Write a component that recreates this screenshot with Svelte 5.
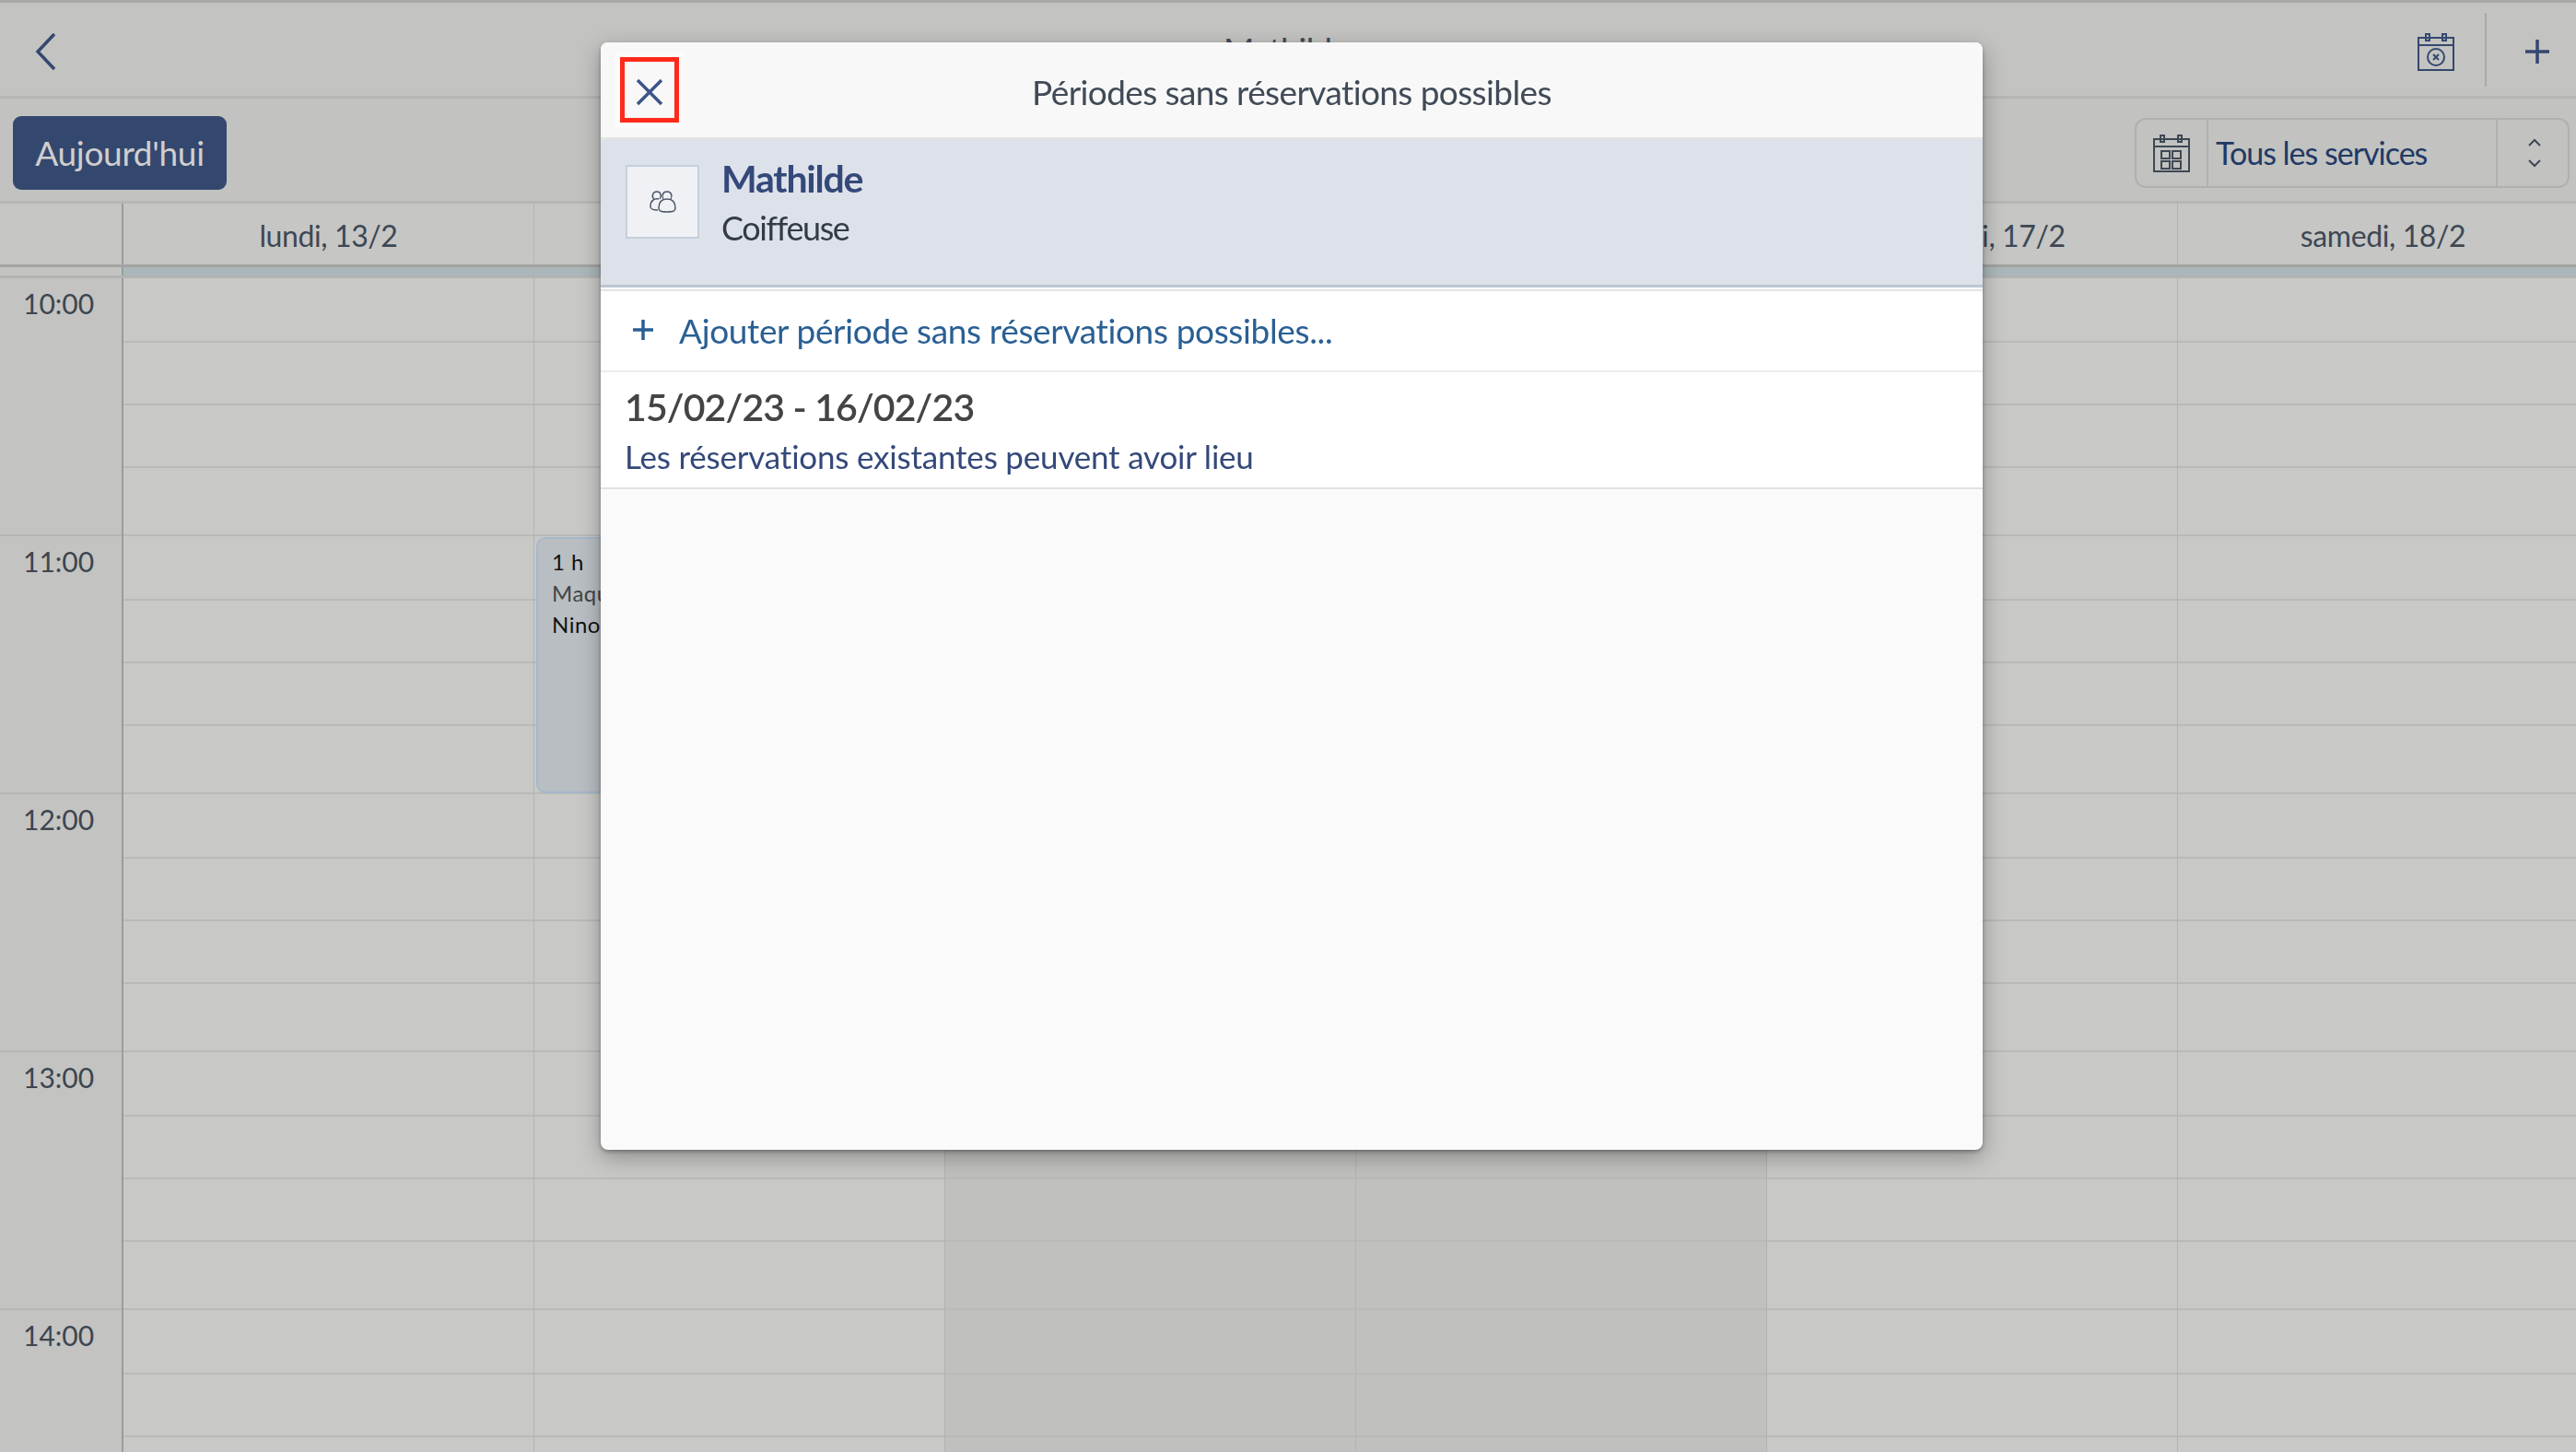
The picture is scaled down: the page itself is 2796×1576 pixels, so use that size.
<script>
  const days = ['lundi, 13/2', 'mardi, 14/2', 'mercredi, 15/2', 'jeudi, 16/2', 'vendredi, 17/2', 'samedi, 18/2'];
  const hours = ['10:00', '11:00', '12:00', '13:00', '14:00'];
  const quarters = Array.from({ length: 20 }, (_, i) => i);
</script>

<div class="page">
  <header class="topbar">
    <svg class="back" width="24" height="42" viewBox="0 0 24 42"><path d="M21 2 L3 21 L21 40" /></svg>
    <div class="page-title">Mathilde</div>
    <svg class="cal-x" width="40" height="42" viewBox="0 0 40 42">
      <path d="M1 6h38v35H1z M1 14h38 M8 6h12 M24 6h8" />
      <path d="M9 2h4v7H9z M27 2h4v7h-4z" />
      <circle cx="20" cy="27" r="9" />
      <path d="M17 24l6 6 M23 24l-6 6" />
    </svg>
    <div class="sep"></div>
    <svg class="plus" width="28" height="28" viewBox="0 0 28 28"><path d="M14 1v26 M1 14h26" /></svg>
  </header>

  <div class="toolbar">
    <button class="today">Aujourd'hui</button>
    <div class="select">
      <div class="select-icon">
        <svg width="40" height="42" viewBox="0 0 40 42">
          <path d="M1 6h38v35H1z M1 14h38 M8 6h12 M24 6h8" />
          <path d="M8 2h4v7H8z M27 2h4v7h-4z" />
          <path d="M9 19h9v8H9z M21 19h9v8h-9z M9 30h9v8H9z M21 30h9v8h-9z" />
        </svg>
      </div>
      <div class="select-text">Tous les services</div>
      <div class="select-arrows">
        <svg width="16" height="32" viewBox="0 0 16 32"><path d="M2 8l6-6 6 6 M2 24l6 6 6-6" /></svg>
      </div>
    </div>
  </div>

  <div class="dayhead">
    <div class="gutter-head"></div>
    {#each days as d}
      <div class="dayname">{d}</div>
    {/each}
  </div>

  <div class="allday">
    <div class="gutter-head"></div>
    {#each days as d}
      <div class="allday-cell"></div>
    {/each}
  </div>

  <div class="grid">
    <div class="gutter">
      {#each hours as h}
        <div class="hour">{h}</div>
      {/each}
    </div>
    {#each days as d, di}
      <div class="col" class:shaded={di === 2 || di === 3}>
        {#each quarters as q}
          <div class="cell"></div>
        {/each}
        {#if di === 1}
          <div class="event">
            <div class="ev-time">1 h</div>
            <div class="ev-name">Maquillage</div>
            <div class="ev-who">Nino</div>
          </div>
        {/if}
      </div>
    {/each}
  </div>
</div>

<div class="modal">
  <div class="modal-head">
    <div class="close">
      <svg width="30" height="30" viewBox="0 0 30 30"><path d="M2 2l26 26 M28 2L2 28" /></svg>
    </div>
    <div class="modal-title">Périodes sans réservations possibles</div>
  </div>
  <div class="person">
    <div class="avatar">
      <svg width="30" height="26" viewBox="0 0 30 26">
        <path d="M6 10 C3 8 4 2 9 2 C14 2 14 8 12 10" />
        <path d="M16 10 C14 7 15 2 20 2 C25 2 26 7 24 10" />
        <path d="M11 10 C6 9 2 12 2 18 C2 21 4 22 10 22" />
        <path d="M20 10 C14 10 11 14 11 20 C11 23 13 24 20 24 C27 24 29 23 29 20 C29 14 26 10 20 10z" />
      </svg>
    </div>
    <div class="person-text">
      <div class="person-name">Mathilde</div>
      <div class="person-job">Coiffeuse</div>
    </div>
  </div>
  <div class="add">
    <svg width="24" height="24" viewBox="0 0 24 24"><path d="M12 1v22 M1 12h22" /></svg>
    <span>Ajouter période sans réservations possibles...</span>
  </div>
  <div class="item">
    <div class="item-date">15/02/23 - 16/02/23</div>
    <div class="item-note">Les réservations existantes peuvent avoir lieu</div>
  </div>
  <div class="rest"></div>
</div>

<style>
  :global(body) {
    margin: 0;
    background: #c8c8c6;
    overflow: hidden;
  }
  :global(#app) {
    font-family: "Lato", "Liberation Sans", sans-serif;
  }
  svg {
    fill: none;
    display: block;
  }
  .page {
    width: 2796px;
    height: 1576px;
    overflow: hidden;
    background: #c8c8c6;
  }
  .topbar {
    height: 107px;
    box-sizing: border-box;
    border-top: 3px solid #a9a9a7;
    border-bottom: 3px solid #b6b6b4;
    background: #c3c3c1;
    display: flex;
    align-items: center;
    padding: 5px 28px 0 38px;
  }
  .back path {
    stroke: #34486f;
    stroke-width: 3.5;
  }
  .page-title {
    flex: 1;
    padding: 0 0 5px 106px;
    text-align: center;
    font-size: 36px;
    letter-spacing: -0.5px;
    color: #414b57;
  }
  .cal-x path, .cal-x circle {
    stroke: #34486f;
    stroke-width: 2;
  }
  .sep {
    width: 2px;
    height: 80px;
    margin: -5px 41px 0 33px;
    background: #a9a9a7;
  }
  .plus path {
    stroke: #34486f;
    stroke-width: 3.5;
  }
  .toolbar {
    height: 114px;
    box-sizing: border-box;
    border-bottom: 3px solid #b6b6b4;
    background: #c2c2c0;
    display: flex;
    align-items: center;
    justify-content: space-between;
    padding: 6px 7px 0 14px;
  }
  .today {
    width: 232px;
    height: 80px;
    border: none;
    border-radius: 9px;
    background: #34486f;
    color: #cfcfcd;
    font: inherit;
    font-size: 37px;
    letter-spacing: -0.3px;
    padding: 0;
  }
  .select {
    width: 472px;
    height: 76px;
    box-sizing: border-box;
    border: 2px solid #b0b0ae;
    border-radius: 12px;
    display: flex;
  }
  .select-icon {
    width: 76px;
    border-right: 2px solid #b0b0ae;
    display: flex;
    align-items: center;
    justify-content: center;
  }
  .select-icon path {
    stroke: #3d4855;
    stroke-width: 2;
  }
  .select-text {
    flex: 1;
    padding-left: 8px;
    font-size: 34px;
    letter-spacing: -1px;
    line-height: 72px;
    color: #1f3a66;
    border-right: 2px solid #b0b0ae;
  }
  .select-arrows {
    width: 76px;
    box-sizing: border-box;
    padding-left: 4px;
    display: flex;
    align-items: center;
    justify-content: center;
  }
  .select-arrows path {
    stroke: #3d4855;
    stroke-width: 2;
  }
  .dayhead {
    display: flex;
    height: 69px;
    box-sizing: border-box;
    background: #c6c6c4;
    border-bottom: 3px solid #a3a3a1;
  }
  .gutter-head {
    width: 132px;
    flex: none;
    border-right: 2px solid #9c9c9a;
  }
  .dayname {
    width: 445px;
    flex: none;
    border-right: 1px solid #b3b3b1;
    text-align: center;
    font-size: 32px;
    letter-spacing: -0.4px;
    line-height: 70px;
    color: #3d4855;
  }
  .allday {
    display: flex;
    height: 12px;
    box-sizing: border-box;
    background: #abb7ba;
    border-bottom: 3px solid #b3b3b1;
  }
  .allday .gutter-head {
    background: #c3c3c1;
  }
  .allday-cell {
    width: 445px;
    flex: none;
    border-right: 1px solid #b3b3b1;
  }
  .grid {
    display: flex;
    height: 1400px;
  }
  .gutter {
    width: 132px;
    flex: none;
    background: #c3c3c1;
    border-right: 2px solid #9c9c9a;
  }
  .hour {
    height: 280px;
    box-sizing: border-box;
    border-bottom: 2px solid #b6b6b4;
    padding: 6px 0 0 25px;
    font-size: 30px;
    line-height: 42px;
    color: #3c4550;
  }
  .col {
    width: 445px;
    flex: none;
    position: relative;
    border-right: 1px solid #b3b3b1;
  }
  .col.shaded {
    background: #c0c0be;
  }
  .cell {
    height: 70px;
    box-sizing: border-box;
    border-bottom: 2px solid #b9b9b7;
  }
  .cell:nth-child(4n + 2), .cell:nth-child(4n + 3) {
    height: 68px;
  }
  .cell:nth-child(4n + 4) {
    height: 74px;
  }
  .event {
    position: absolute;
    left: 2px;
    top: 281px;
    width: 435px;
    height: 278px;
    box-sizing: border-box;
    background: #b9bec3;
    border: 2px solid #a5b8cc;
    border-radius: 10px;
    padding: 8px 15px;
    font-size: 24px;
    letter-spacing: 0.5px;
    line-height: 34px;
    color: #111;
  }
  .ev-name {
    color: #444;
  }
  .modal {
    position: fixed;
    left: 652px;
    top: 46px;
    width: 1500px;
    height: 1202px;
    border-radius: 8px;
    overflow: hidden;
    background: #fafafa;
    box-shadow: 0 8px 24px rgba(0, 0, 0, 0.3), 0 2px 4px rgba(0, 0, 0, 0.3);
    display: flex;
    flex-direction: column;
  }
  .modal-head {
    height: 105px;
    flex: none;
    box-sizing: border-box;
    background: #f8f8f8;
    border-bottom: 2px solid #e4e4e4;
    display: flex;
    align-items: center;
    padding: 0 21px;
  }
  .close {
    width: 54px;
    height: 61px;
    border: 5px solid #ff2a1a;
    box-shadow: 0 0 0 6px #fbfbfb;
    display: flex;
    align-items: center;
    justify-content: center;
    flex: none;
  }
  .close svg {
    margin-top: 5px;
  }
  .close path {
    stroke: #3c5488;
    stroke-width: 3.5;
  }
  .modal-title {
    flex: 1;
    text-align: center;
    padding: 3px 64px 0 0;
    font-size: 37px;
    letter-spacing: -0.6px;
    color: #414b57;
  }
  .person {
    height: 158px;
    flex: none;
    background: #dde2ea;
    border-bottom: 3px solid #bcc6d4;
    display: flex;
    padding: 0 27px;
  }
  .avatar {
    width: 80px;
    height: 80px;
    margin-top: 28px;
    box-sizing: border-box;
    border: 2px solid #c5d0dc;
    background: #eff1f5;
    display: flex;
    align-items: center;
    justify-content: center;
  }
  .avatar path {
    stroke: #4a5563;
    stroke-width: 1.5;
  }
  .person-text {
    margin-left: 24px;
    padding-top: 18px;
  }
  .person-name {
    font-size: 41px;
    font-weight: 700;
    letter-spacing: -1.2px;
    line-height: 50px;
    color: #34487a;
  }
  .person-job {
    font-size: 36px;
    letter-spacing: -1.4px;
    line-height: 56px;
    color: #333b46;
  }
  .add {
    height: 90px;
    flex: none;
    box-sizing: border-box;
    margin-top: 2px;
    background: #fff;
    border-top: 2px solid #e4e4e4;
    border-bottom: 2px solid #ececec;
    display: flex;
    align-items: center;
    gap: 27px;
    padding: 0 0 2px 34px;
    font-size: 37px;
    letter-spacing: -0.35px;
    color: #2a5f94;
  }
  .add path {
    stroke: #2a5f94;
    stroke-width: 3.5;
  }
  .item {
    height: 127px;
    flex: none;
    box-sizing: border-box;
    background: #fff;
    border-bottom: 2px solid #e2e2e2;
    padding: 10px 26px 0;
  }
  .item-date {
    font-size: 41px;
    font-weight: 600;
    letter-spacing: -0.9px;
    line-height: 56px;
    color: #444;
  }
  .item-note {
    font-size: 35px;
    letter-spacing: -0.2px;
    line-height: 50px;
    color: #34497a;
  }
  .rest {
    flex: 1;
  }
</style>
